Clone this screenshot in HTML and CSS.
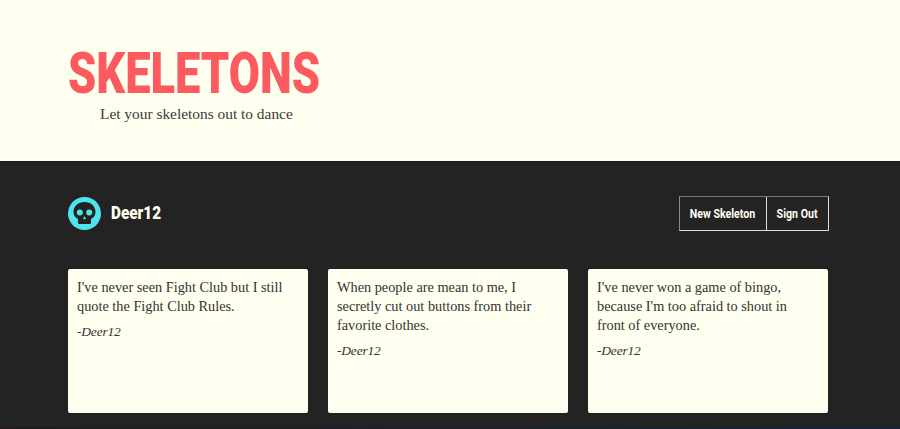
FILE: index.html
```html
<html>
    <head>
        <title>Skeletons</title>
        <link rel="stylesheet" href="styles.css">
    </head>
    <body>
        <div class="banner">
            <h1 class="logo">SKELETONS</h1>
            <p class="tagline">Let your skeletons out to dance</p>
        </div>

        <div class="main">
            <div class="topbar">
                <div class="user">
                    <svg class="avatar" width="33" height="33" viewBox="0 0 33 33">
                        <circle cx="16.5" cy="16.5" r="16.5" fill="#4fe3ec"/>
                        <path d="M16.5 5c6.400 0 11 4.200 11 9.800 0 3.400-1.800 5.900-4.500 7.200v3.500q0 1.500-1.500 1.500h-10q-1.500 0-1.500-1.500v-3.500c-2.700-1.300-4.500-3.800-4.500-7.200 0-5.600 4.600-9.800 11-9.800z" fill="#222223"/>
                        <circle cx="11.800" cy="15.500" r="3" fill="#4fe3ec"/>
                        <circle cx="21.200" cy="15.500" r="3" fill="#4fe3ec"/>
                        <path d="M16.500 19l1.600 3h-3.200z" fill="#4fe3ec"/>
                    </svg>
                    <span class="username"><span class="squeeze">Deer12</span></span>
                </div>
                <div class="buttons">
                    <a class="btn btn-new"><span class="squeeze">New Skeleton</span></a>
                    <a class="btn btn-out"><span class="squeeze">Sign Out</span></a>
                </div>
            </div>

            <div class="cards">
                <div class="card">
                    <p>I've never seen Fight Club but I still quote the Fight Club Rules.</p>
                    <p class="author">-Deer12</p>
                </div>
                <div class="card">
                    <p>When people are mean to me, I secretly cut out buttons from their favorite clothes.</p>
                    <p class="author">-Deer12</p>
                </div>
                <div class="card">
                    <p>I've never won a game of bingo, because I'm too afraid to shout in front of everyone.</p>
                    <p class="author">-Deer12</p>
                </div>
            </div>
        </div>
        <div class="strip"></div>
    </body>
</html>
```

FILE: styles.css
```css
html, body{
    height: 100%;
}

body{
    margin: 0;
    background-color: #232324;
    font-family: "Liberation Serif", serif;
    color: #333;
    overflow: hidden;
}

.banner{
    box-sizing: border-box;
    height: 162px;
    padding: 45px 68px 0;
    background-color: #ffffef;
    border-bottom: 1px solid #1a1a1a;
}

.logo{
    margin: 0;
    font-family: Roboto, sans-serif;
    font-size: 58px;
    line-height: 56px;
    font-weight: 900;
    color: #fb5a5e;
    transform: scaleX(0.78);
    transform-origin: left center;
    white-space: nowrap;
}

.tagline{
    margin: 4px 0 0 32px;
    font-size: 15.4px;
    line-height: 18px;
    color: #3a3a3a;
}

.main{
    padding: 34px 71px 0 68px;
}

.topbar{
    display: flex;
    justify-content: space-between;
    align-items: center;
    height: 35px;
}

.user{
    display: flex;
    align-items: center;
    gap: 10px;
}

.squeeze{
    display: inline-block;
    white-space: nowrap;
}

.username{
    padding-bottom: 2px;
    font-family: Roboto, sans-serif;
    font-size: 18px;
    font-weight: 900;
    color: #fffff0;
}

.username .squeeze{
    transform: scaleX(0.85);
    transform-origin: left center;
}

.buttons{
    display: flex;
    border: 1px solid #ddd;
    border-top-color: #777;
    border-left-color: #888;
}

.btn{
    height: 33px;
    line-height: 33px;
    text-align: center;
    font-family: Roboto, sans-serif;
    font-size: 12.5px;
    font-weight: 700;
    color: #fffff0;
}

.btn .squeeze{
    transform: scaleX(0.85);
}

.btn-new{
    width: 86px;
}

.btn-out{
    width: 61px;
    border-left: 1px solid #ddd;
}

.cards{
    display: flex;
    gap: 20px;
    margin-top: 38px;
}

.card{
    box-sizing: border-box;
    width: 240px;
    height: 144px;
    padding: 9px 18px 9px 9px;
    background-color: #ffffef;
    border-radius: 2px;
    font-size: 14.3px;
    line-height: 19px;
    color: #333;
}

.card p{
    margin: 0 0 6px;
}

.card .author{
    font-size: 13.5px;
    letter-spacing: -0.2px;
    font-style: italic;
}

.strip{
    height: 2px;
    margin-top: 14px;
    background: linear-gradient(90deg, #221a1c, #1c2029 50%, #17233a);
}
```
